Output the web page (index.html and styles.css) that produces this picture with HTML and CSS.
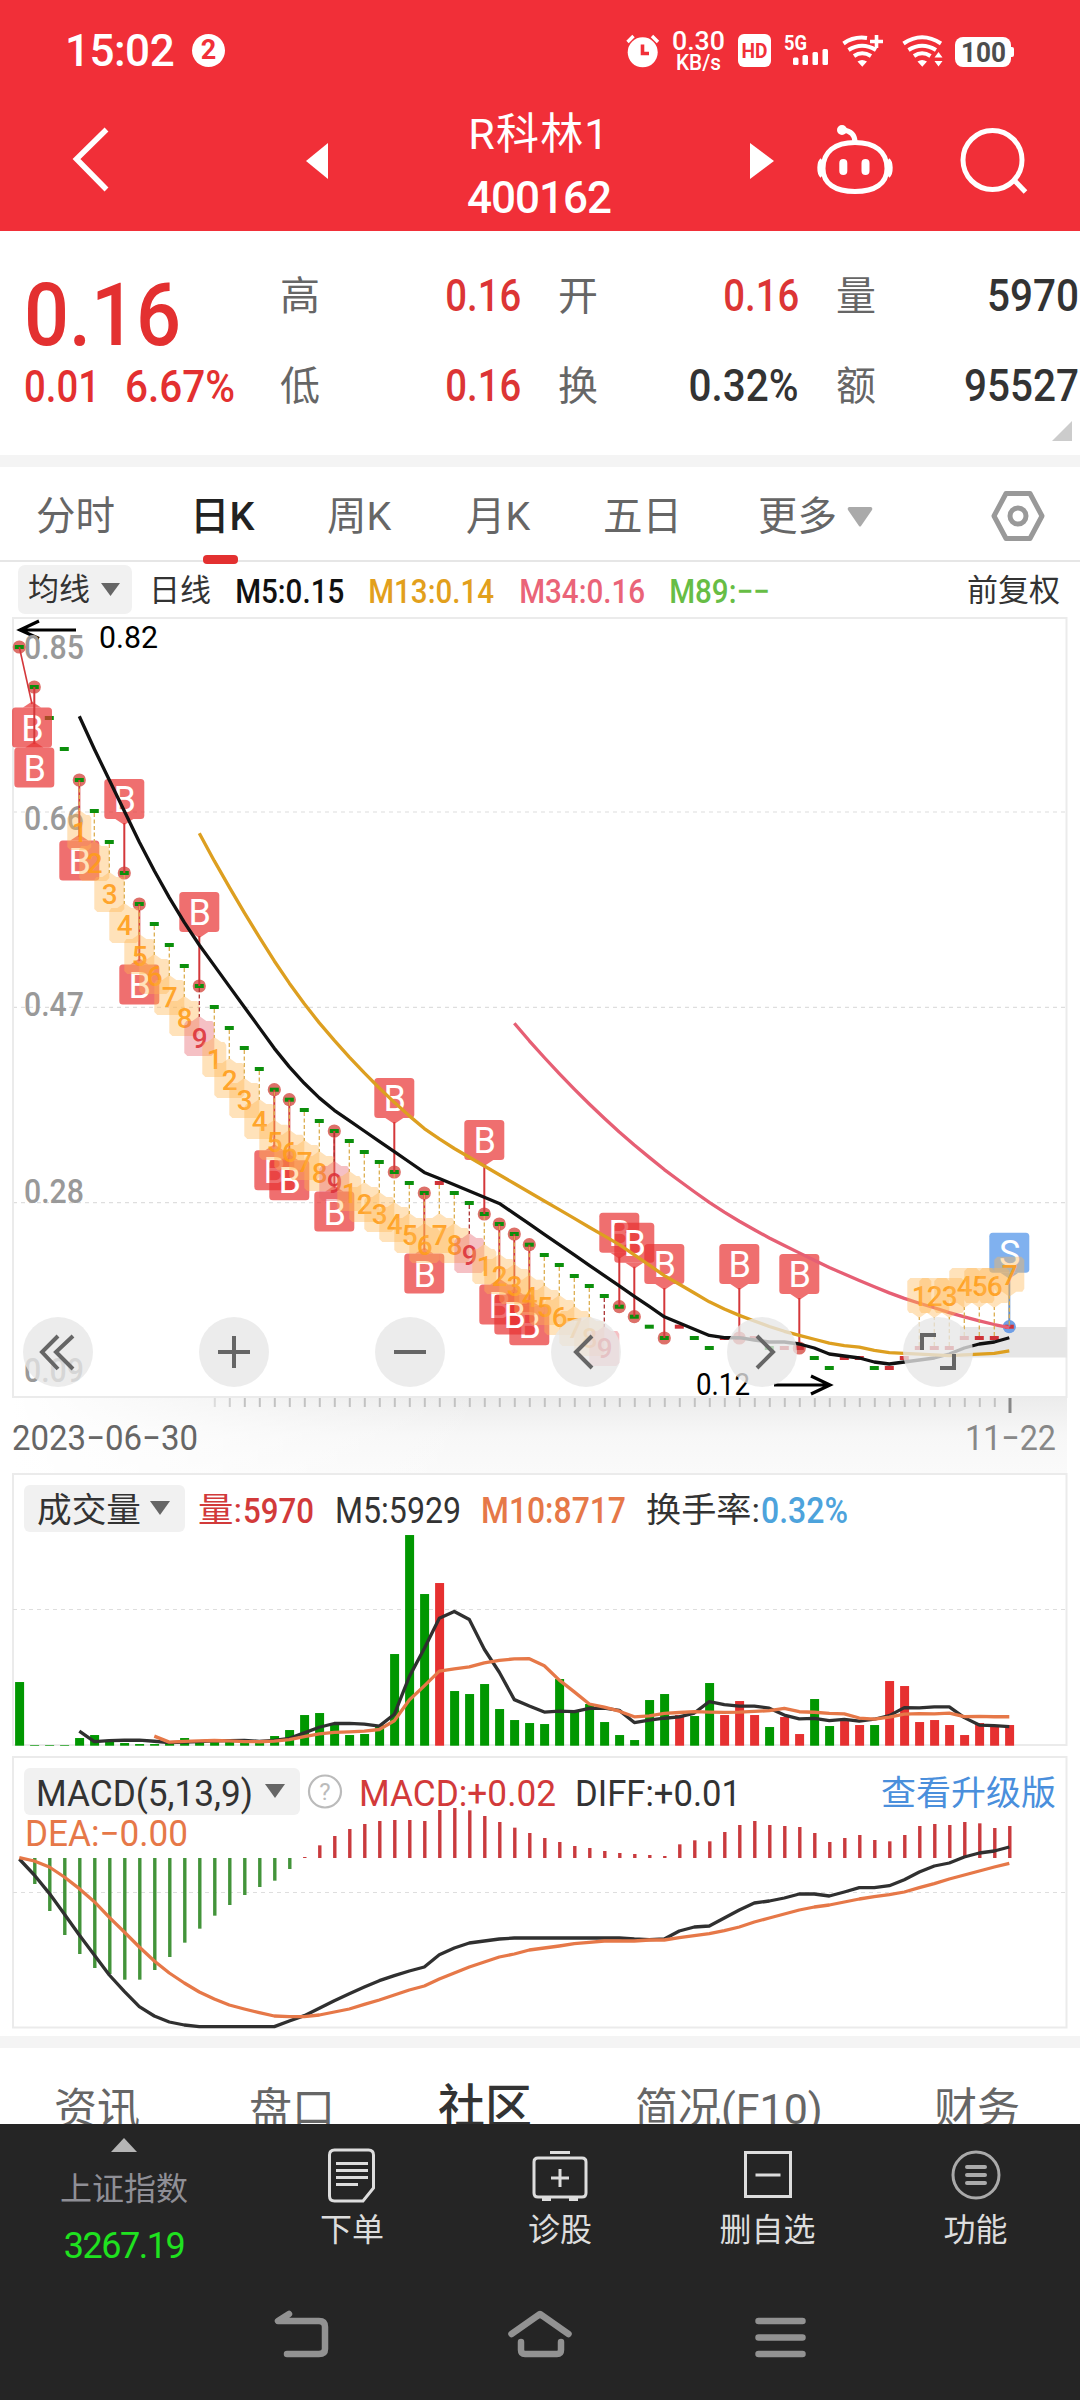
FILE: index.html
```html
<!DOCTYPE html>
<html lang="zh-CN">
<head>
<meta charset="utf-8">
<title>R科林1 400162</title>
<link rel="stylesheet" href="styles.css">
</head>
<body>
<header class="header">
  <div class="status">
    <span class="clock">15:02</span><span class="badge">2</span>
    <svg class="status-icons" width="480" height="60" viewBox="600 20 480 60" fill="#fff">
      <circle cx="642.7" cy="52.3" r="15"/>
      <path d="M627.5 42l6-6M658 42l-6-6" stroke="#fff" stroke-width="3.4"/>
      <path d="M642.5 44.500v9h6.500" fill="none" stroke="#f12f38" stroke-width="3.6"/>
      <text x="672" y="49.500" font-size="25" font-weight="500" textLength="53" lengthAdjust="spacingAndGlyphs">0.30</text>
      <text x="676" y="69.500" font-size="22" font-weight="500" textLength="45" lengthAdjust="spacingAndGlyphs">KB/s</text>
      <rect x="738" y="34" width="33" height="33" rx="6"/>
      <text x="741.500" y="57.500" font-size="20" font-weight="700" fill="#f12f38" textLength="26" lengthAdjust="spacingAndGlyphs">HD</text>
      <text x="784" y="49.500" font-size="20" font-weight="700" textLength="23" lengthAdjust="spacingAndGlyphs">5G</text>
      <rect x="793" y="57.500" width="5.500" height="7.500" rx="1.500"/><rect x="802.500" y="55" width="5.500" height="10" rx="1.500"/>
      <rect x="812.500" y="52" width="5.500" height="13" rx="1.500"/><rect x="822.500" y="49" width="5.500" height="16" rx="1.500"/>
      <g fill="none" stroke="#fff" stroke-width="4">
        <path d="M843.500 43.500Q854 36 867 38M848.500 50Q862 41.500 876 50M854 56Q862 50.500 871 56"/>
        <path d="M870 41.500h13M876.500 35v13" stroke-width="3.600"/>
        <path d="M903.500 43.500Q922 31 941 43.500M908.500 50Q922 41.500 936 50M914 56Q922 50.500 930.500 56"/>
      </g>
      <path d="M857.500 61.500Q862 58.500 867 61.500L862.300 66.800zM917.500 61.500Q922 58.500 927 61.500L922.300 66.800zM934.500 57.500l4-5.500 4 5.500zM934.500 61l4 5.500 4-5.500z"/>
      <rect x="955" y="37" width="56" height="30" rx="8"/><path d="M1010 47h2q2 0 2 2v6q0 2-2 2h-2z"/>
      <text x="961" y="61.500" font-size="27" font-weight="700" fill="#4d4d4d" textLength="45" lengthAdjust="spacingAndGlyphs">100</text>
    </svg>
  </div>
  <div class="titlebar">
    <svg class="back" width="40" height="66" viewBox="72 126 40 66"><path d="M106.500 129.500L76.500 159l30 30.500" fill="none" stroke="#fff" stroke-width="5.500"/></svg>
    <svg class="prev" width="22" height="36" viewBox="0 0 22 36"><path d="M22 0v36L0 18z" fill="#fff"/></svg>
    <div class="title"><div>R科林1</div><div class="code">400162</div></div>
    <svg class="next" width="24" height="36" viewBox="0 0 24 36"><path d="M0 0v36L24 18z" fill="#fff"/></svg>
    <svg class="robot" width="80" height="74" viewBox="815 123 80 74" fill="none" stroke="#fff" stroke-width="5">
      <path d="M855 142.500c20 0 32 9 32 26 0 15-12 23-32 23s-32-8-32-23c0-17 12-26 32-26z"/>
      <path d="M855 142c0-7-4-11-12-12"/><circle cx="842" cy="130" r="2.500"/>
      <path d="M822 160c-3 2-3.500 13 0 16M888 160c3 2 3.500 13 0 16" stroke-width="4.500"/>
      <path d="M843.300 163v8M865.500 163v8" stroke-width="8" stroke-linecap="round"/>
    </svg>
    <svg class="search" width="70" height="70" viewBox="959 126 70 70" fill="none" stroke="#fff" stroke-width="5"><circle cx="992.500" cy="160" r="29.500"/><path d="M1014 180l11.500 12"/></svg>
  </div>
</header>

<section class="quote">
  <div class="last"><div class="price"><b class="din">0.16</b></div><div class="change"><span class="din">0.01</span><span class="din wide">6.67%</span></div></div>
  <dl class="stats">
    <dt>高</dt><dd class="up"><span class="din">0.16</span></dd><dt>开</dt><dd class="up"><span class="din">0.16</span></dd><dt>量</dt><dd><span class="din wide">5970</span></dd>
    <dt>低</dt><dd class="up"><span class="din">0.16</span></dd><dt>换</dt><dd><span class="din wide">0.32%</span></dd><dt>额</dt><dd><span class="din wide">95527</span></dd>
  </dl>
  <svg class="corner" width="20" height="20"><path d="M20 0v20H0z" fill="#ccc"/></svg>
</section>

<nav class="periods">
  <a>分时</a><a class="on">日K</a><a>周K</a><a>月K</a><a>五日</a><a>更多<svg width="26" height="20"><path d="M2 0h22q2 1 1 3L14 19q-1 1-2 0L1 3Q0 1 2 0z" fill="#aaa"/></svg></a>
  <svg class="gear" width="56" height="52" viewBox="0 0 56 52" fill="none" stroke="#999" stroke-width="5" stroke-linejoin="round"><path d="M16 3.500h24L52 26 40 48.500H16L4 26z"/><circle cx="28" cy="26" r="8"/></svg>
</nav>

<div class="legend">
  <span class="pick">均线<svg width="19" height="13"><path d="M0 0h19L9.500 13z" fill="#666"/></svg></span>
  <span>日线</span><span class="din m5">M5:0.15</span><span class="din m13">M13:0.14</span><span class="din m34">M34:0.16</span><span class="din m89">M89:−−</span><span class="adj">前复权</span>
</div>

<section class="kline">
  <svg id="kline" width="1080" height="858" viewBox="0 615 1080 858"></svg>
  <div class="tools">
    <button><svg viewBox="-35 -35 70 70"><path d="M0-16L-16 0 0 17M15-16L-2 0 15 17"/></svg></button>
    <button><svg viewBox="-35 -35 70 70"><path d="M-16 0h32M0-16v32"/></svg></button>
    <button><svg viewBox="-35 -35 70 70"><path d="M-16 0h32"/></svg></button>
    <button><svg viewBox="-35 -35 70 70"><path d="M6-16L-10 0 6 16"/></svg></button>
    <button><svg viewBox="-35 -35 70 70"><path d="M-5-16L11 0-5 16"/></svg></button>
    <button><svg viewBox="-35 -35 70 70"><path d="M-16-2v-15H-2M16 2v14H2"/></svg></button>
  </div>
</section>
<svg id="volume" class="panel" width="1080" height="283" viewBox="0 1473 1080 283"></svg>
<svg id="macd" class="panel" width="1080" height="280" viewBox="0 1756 1080 280"></svg>

<nav class="sections"><a>资讯</a><a>盘口</a><a class="on">社区</a><a>简况(F10)</a><a>财务</a></nav>

<footer class="footer">
  <div class="actions">
    <div class="index"><svg width="26" height="14"><path d="M13 0l13 14H0z" fill="#b5b5b5"/></svg><span class="name">上证指数</span><span class="points">3267.19</span></div>
    <div class="action"><svg width="60" height="60" viewBox="-30 -30 60 60"><path d="M-22.500-20q0-5 5-5h34q5 0 5 5v33L11 26h-28.500q-5 0-5-5zM-16-11.500h32M-16-4.500h32M-16 2.500h32M-16 9.500H6"/></svg><span>下单</span></div>
    <div class="action"><svg width="60" height="60" viewBox="-30 -30 60 60"><path d="M-26-13q0-4 4-4h44q4 0 4 4v31q0 4-4 4h-44q-4 0-4-4zM-10-22.500h20M-9 3H9M0-6v18M-18 24.500h9M9 24.500h9"/></svg><span>诊股</span></div>
    <div class="action"><svg width="60" height="60" viewBox="-30 -30 60 60"><path d="M-22.500-22.500h45v44h-45zM-12.500 0h25"/></svg><span>删自选</span></div>
    <div class="action dim"><svg width="60" height="60" viewBox="-30 -30 60 60"><circle r="23"/><path d="M-9-8H9M-9 0H9M-9 8H9" stroke-width="4" stroke-linecap="round"/></svg><span>功能</span></div>
  </div>
  <svg class="sysnav" width="1080" height="70" viewBox="0 2300 1080 70" fill="none" stroke="#929292" stroke-width="6.500" stroke-linecap="round" stroke-linejoin="round">
    <path d="M289 2314l-11 7h41q6 0 6 6v22q0 5-6 5h-32M511.500 2334l28.500-20 28.500 20M521 2342v8q0 4 4 4h32q4 0 4-4v-8M758.500 2321h44M758.500 2337.500h44M758.500 2354h44"/>
  </svg>
</footer>
<script src="charts.js"></script>
</body>
</html>
```
FILE: styles.css
```css
* { box-sizing: border-box; }
body { margin: 0; width: 1080px; height: 2400px; overflow: hidden; background: #fff; color: #333; font-family: Roboto, "Noto Sans CJK SC", sans-serif; }
svg { display: block; flex: none; }
svg text { font-family: Roboto, "Noto Sans CJK SC", sans-serif; }
.din { display: inline-block; font-weight: 500; transform: scaleX(.87); transform-origin: left center; white-space: nowrap; }

.header { height: 231px; background: #f12f38; color: #fff; }
.status { display: flex; align-items: center; height: 100px; padding-left: 65px; }
.clock { width: 109px; font-size: 44px; font-weight: 500; letter-spacing: -.5px; line-height: 60px; padding-top: 2px; }
.badge { width: 33px; height: 33px; margin-left: 18px; border-radius: 50%; background: #fff; color: #f12f38; font-size: 27px; font-weight: 700; line-height: 33px; text-align: center; }
.status-icons { margin-left: auto; }
.titlebar { display: flex; align-items: flex-start; height: 130px; padding-left: 72px; }
.back { margin-top: 26px; }
.prev { margin: 43px 0 0 194px; }
.title { width: 280px; margin: 4px 0 0 71px; font-size: 43px; font-weight: 400; letter-spacing: 1.200px; line-height: 60px; text-align: center; }
.title .code { margin-top: 4px; font-size: 44px; font-weight: 500; letter-spacing: -1px; }
.next { margin: 43px 0 0 71px; }
.robot { margin: 23px 0 0 41px; }
.search { margin: 26px 0 0 64px; }

.quote { position: relative; display: flex; height: 236px; border-bottom: 12px solid #f4f4f4; }
.last { width: 281px; padding: 39px 0 0 24px; color: #e33030; }
.price { height: 90px; font-size: 88px; line-height: 90px; }
.price .din { font-weight: 500; transform: scaleX(.9); }
.change { display: grid; grid-template-columns: 101px 1fr; font-size: 44px; line-height: 60px; margin-top: -3px; }
.stats { flex: 1; display: grid; grid-template-columns: 41px 200px 37px 41px 200px 37px 41px 202px; grid-template-rows: 90px 90px; margin: 20px 0 0 -1px; font-size: 44px; line-height: 90px; }
.stats dt { font-size: 40px; color: #666; padding-top: 1px; }
.stats dt:nth-of-type(3n+2) { grid-column: 4; }
.stats dt:nth-of-type(3n) { grid-column: 7; }
.stats dt:nth-of-type(3n+1) { grid-column: 1; }
.stats dd { margin: 0; text-align: right; }
.stats .din { transform-origin: right center; }
.change .wide, .stats .wide { transform: scaleX(.92); }
.stats .up { color: #dc3535; }
.corner { position: absolute; right: 8px; bottom: 14px; }

.periods { display: grid; grid-template-columns: 154px 137px 139px 137px 155px 232px 60px; height: 95px; padding-left: 36px; border-bottom: 2px solid #e6e6e6; font-size: 39.500px; line-height: 95px; color: #666; }
.periods a { display: flex; align-items: center; gap: 10px; padding-top: 2px; }
.periods .on { position: relative; color: #222; font-weight: 500; }
.periods .on::after { content: ""; position: absolute; left: 13px; bottom: 0; width: 35px; height: 9px; border-radius: 4px; background: #e33030; }
.gear { align-self: center; }

.legend { display: grid; grid-template-columns: 114px 84px 133px 151px 150px 297px 1fr; height: 53px; padding: 3px 0 0 18px; font-size: 31px; line-height: 52px; }
.pick { display: flex; align-items: center; height: 49px; padding-left: 10px; gap: 11px; background: #f1f1f1; border-radius: 7px; }
.legend > span + span { padding-left: 17px; }
.legend > .din { padding-left: 22px; font-size: 34px; }
.m5 { color: #111; } .m13 { color: #e2a01c; } .m34 { color: #ea6478; } .m89 { color: #67bd45; }
.legend > .adj { padding-left: 20px; }

.kline { position: relative; height: 858px; }
.tools { position: absolute; top: 702px; left: 23px; display: flex; gap: 106px; }
.tools button { width: 70px; height: 70px; padding: 0; border: 0; border-radius: 50%; background: rgba(231, 231, 231, .78); }
.tools path { fill: none; stroke: #666; stroke-width: 4; }

.sections { display: grid; grid-template-columns: 195px 189px 197px 299px 1fr; height: 88px; padding-left: 54px; border-top: 12px solid #f4f4f4; overflow: hidden; font-size: 43px; line-height: 123px; color: #666; white-space: nowrap; }
.sections .on { color: #333; font-size: 47px; font-weight: 500; line-height: 117px; }

.footer { height: 276px; background: #252525; color: #ddd; font-size: 32px; }
.actions { display: grid; grid-template-columns: 248px 208px 208px 207px 209px; height: 176px; }
.index { display: flex; flex-direction: column; align-items: center; padding-top: 14px; line-height: 57px; }
.index .name { margin-top: 9px; color: #8f8f96; }
.index .points { font-size: 36px; letter-spacing: -1.500px; color: #1fe21f; }
.action { display: flex; flex-direction: column; align-items: center; padding-top: 21px; line-height: 51px; }
.action svg { fill: none; stroke: #ddd; stroke-width: 3; }
.action.dim svg { stroke: #aaa; }
.sysnav { display: block; }
```
FILE: charts.js
```js
const COUNT = 67, X0 = 19.3, STEP = 15;
const xAt = i => X0 + STEP * i;
const el = (tag, attrs, text) => {
  const a = Object.entries(attrs).map(([k, v]) => `${k}="${v}"`).join(' ');
  return `<${tag} ${a}>${text ?? ''}</${tag}>`;
};
const label = (text, x, y, size, width, fill, weight = 400) =>
  el('text', { x, y, 'font-size': size, fill, 'font-weight': weight, textLength: width, lengthAdjust: 'spacingAndGlyphs' }, text);
const poly = (points, stroke, w = 3.3) => el('polyline', { points: points.map(p => p.join()).join(' '), fill: 'none', stroke, 'stroke-width': w, 'stroke-linejoin': 'round' });
const average = (ys, n) => ys.slice(n - 1).map((_, k) => [xAt(k + n - 1), ys.slice(k, k + n).reduce((a, b) => a + b) / n]);
const grid = y => el('path', { d: `M13 ${y}H1066`, stroke: '#dedede', 'stroke-width': 1.2, 'stroke-dasharray': '4 4' });
const frame = (y, b) => el('rect', { x: 13, y, width: 1053.5, height: b - y, fill: 'none', stroke: '#ebebeb', 'stroke-width': 2 });
const picker = (x, y, w) => el('rect', { x, y, width: w, height: 47, rx: 6, fill: '#f1f1f1' });
const caret = (x, y) => el('path', { d: `M${x} ${y}h20l-10 14z`, fill: '#666' });

// Daily closes, as vertical chart positions
const close = [647, 687, 718, 749, 780, 811, 842, 873, 904, 924, 945, 966, 986, 1007, 1028, 1048, 1069, 1089.7, 1099.7, 1110, 1121, 1131, 1141, 1152, 1162, 1172, 1183, 1193, 1183, 1193, 1203, 1214, 1224, 1234, 1244.7, 1255, 1265, 1276, 1286, 1296, 1306.7, 1316.7, 1326.7, 1338, 1326.7, 1338, 1348, 1338, 1338, 1338, 1348, 1348, 1348, 1358, 1368, 1358, 1358, 1368, 1368, 1358, 1348, 1348, 1348, 1338, 1338, 1338, 1326.7];
const redDays = new Set([28, 44, 47, 48, 49, 51, 52, 55, 56, 58, 59, 60, 61, 62, 63, 64, 65, 66]);

function drawKline() {
  let s = `<defs><linearGradient id="v" x1="0" y1="0" x2="0" y2="1"><stop offset="0" stop-color="#ececec"/><stop offset=".5" stop-color="#f7f7f7"/><stop offset="1" stop-color="#fafafa"/></linearGradient>
  <linearGradient id="h"><stop offset="0" stop-color="#fff"/><stop offset=".28" stop-color="#fff" stop-opacity=".3"/><stop offset=".45" stop-color="#fff" stop-opacity="0"/></linearGradient></defs>`;
  s += el('rect', { x: 12, y: 1398, width: 1055, height: 75, fill: 'url(#v)' }) + el('rect', { x: 12, y: 1398, width: 1055, height: 75, fill: 'url(#h)' });
  s += [812, 1007.3, 1202.7].map(grid).join('') + frame(618, 1397);
  s += el('rect', { x: 960, y: 1327, width: 107, height: 30.5, fill: '#e6e6e6' });
  for (let i = 13; i < 66; i++) s += el('path', { d: `M${xAt(i) + .5} 1398v9`, stroke: '#c2c2c2', 'stroke-width': 2, opacity: Math.min(1, (i - 11) / 4) });
  s += el('path', { d: 'M1010 1398v15', stroke: '#888', 'stroke-width': 3 });
  s += el('path', { d: 'M76 630H20M39 621L20 630l19 8.500M774 1385h55M811 1376l19 9-19 9', fill: 'none', stroke: '#000', 'stroke-width': 3.2 });
  s += label('0.82', 99, 648, 31, 59, '#000') + label('0.12', 696, 1394.5, 31, 54, '#000');
  [['0.85', 659], ['0.66', 830], ['0.47', 1016], ['0.28', 1203], ['0.09', 1382]].forEach(([t, y]) => s += label(t, 24, y, 34, 60, '#999', 500));

  const below = [0, 1, 4, 8, 17, 18, 21, 27, 32, 34, 33], above = [7, 12, 25, 31, 40, 41, 43, 48, 52, 66];
  [...below, ...above].forEach(i => s += el('circle', { cx: xAt(i), cy: close[i], r: 6.6, fill: i === 66 ? '#6f9fe6' : '#dd7069' }));
  close.forEach((y, i) => s += el('rect', { x: xAt(i) - 4.5, y: y - 2, width: 9, height: 4, fill: redDays.has(i) ? '#cf3238' : '#0c8f0c' }));
  [...below, ...above].forEach(i => {
    const up = above.includes(i), sell = i === 66, x = xAt(i), y = close[i];
    const bx = Math.max(12, x - 20), by = up ? y - 94 : y + 60.5;
    const color = sell ? '#4a90e8' : '#e83232', tip = i === 0 ? 32 : x;
    s += el('path', { d: up ? `M${x} ${y}V${y - 50}` : `M${x} ${y}L${tip} ${y + 57}`, stroke: sell ? '#6590c8' : '#d4383b', 'stroke-width': i === 0 ? 1.6 : 2 });
    s += el('rect', { x: bx, y: by, width: 40, height: 40, rx: 3.5, fill: color, 'fill-opacity': .7 });
    s += el('path', { d: up ? `M${tip - 9} ${by + 40}h18l-9 6z` : `M${tip - 9} ${by}h18l-9-6z`, fill: color, 'fill-opacity': .7 });
    s += el('text', { x: bx + 20.5, y: by + 33, 'font-size': 36, fill: '#fff', 'text-anchor': 'middle' }, sell ? 'S' : 'B');
  });
  s += poly(average(close, 5), '#111') + poly(average(close, 13), '#dd9f20') + poly(average(close, 34), '#e65f74');

  const count = (i, n, up) => {
    const x = xAt(i), y = close[i], d = up ? -1 : 1, w = n === 1 ? 12 : 15, nine = n === 9;
    s += el('path', { d: `M${x} ${y + 2 * d}V${y + 31 * d}`, stroke: nine ? '#a33' : '#dcae50', 'stroke-width': 1.3, 'stroke-dasharray': '4 2.5' });
    const edge = y + 36 * d, far = y + 70 * d;
    s += el('path', { d: `M${x} ${y + 30 * d}L${x + 7} ${edge - d}H${x + w - 2}L${x + w} ${edge + 2 * d}V${far - 3 * d}L${x + w - 3} ${far}H${x - w + 3}L${x - w} ${far - 3 * d}V${edge + 2 * d}L${x - w + 2} ${edge - d}H${x - 7}z`, fill: nine ? '#e6616b' : '#ffb652', 'fill-opacity': .4 });
    s += el('text', { x: x + .5, y: y + 52 * d + 10, 'font-size': 28, 'font-weight': 500, fill: nine ? '#dc3038' : '#ff9d18', 'fill-opacity': .9, 'text-anchor': 'middle' }, n);
  };
  for (let i = 4; i < 40; i++) count(i, (i - 4) % 9 + 1, false);
  for (let i = 60; i < 67; i++) count(i, i - 59, true);
  s += label('2023−06−30', 12, 1450, 35, 186, '#666') + label('11−22', 965, 1450, 35, 91, '#888');
  document.getElementById('kline').innerHTML = s;
}

function drawVolume() {
  const h = [191, 2, 2, 2, 23, 32, 17, 8, 5, 5, 12, 23, 17, 14, 11, 13, 11, 29, 47, 92, 98, 67, 32, 35, 62, 275, 632, 455, 488, 164, 155, 185, 110, 77, 68, 65, 200, 102, 125, 71, 32, 17, 137, 155, 92, 89, 188, 92, 134, 92, 56, 86, 35, 140, 59, 74, 62, 62, 194, 179, 71, 77, 62, 32, 68, 62, 62].map(v => v / 3);
  const red = new Set([28, 44, 47, 48, 49, 51, 52, 55, 56, 58, 59, 60, 61, 62, 63, 64, 65, 66]);
  const base = 1745.7, ys = h.map(v => base - v);
  let s = frame(1474, 1745) + grid(1609.5);
  h.forEach((v, i) => s += el('rect', { x: xAt(i) - 4.2, y: base - v, width: 9, height: v, fill: red.has(i) ? '#e63030' : '#009700' }));
  s += poly(average(ys, 5), '#303030') + poly(average(ys, 10), '#e67848');
  s += picker(24, 1485, 161) + caret(150, 1501) + label('成交量', 37, 1522, 34, 104, '#333');
  s += label('量:', 198, 1522, 34, 44, '#d23a3a') + label('5970', 243, 1522.5, 35.5, 71, '#d23a3a', 500);
  s += label('M5:5929', 335, 1522.5, 36, 126, '#333') + label('M10:8717', 481, 1522.5, 36, 145, '#e67848', 500);
  s += label('换手率:', 646, 1522, 34, 114, '#333') + label('0.32%', 761, 1522.5, 36, 87, '#4da3dc', 500);
  document.getElementById('volume').innerHTML = s;
}

function drawMacd() {
  const zero = 1858, toY = v => 1750 + v / 3;
  const bars = [324, 402, 483, 555, 612, 654, 672, 689, 689, 660, 621, 578, 536, 497, 465, 435, 411, 392, 357, 321, 286, 258, 237, 222, 213, 210, 210, 213, 180, 174, 181, 198, 216, 233, 249, 264, 276, 288, 294, 303, 309, 312, 315, 318, 283, 271, 274, 246, 225, 213, 225, 228, 231, 249, 276, 264, 255, 270, 274, 255, 228, 222, 225, 216, 220, 234, 228].map(toY);
  const diff = [327, 375, 430, 492, 555, 615, 675, 724, 770, 798, 816, 825, 830, 830, 830, 830, 830, 830, 813, 797, 775, 752, 731, 711, 692, 677, 663, 651, 614, 594, 579, 573, 567, 564, 564, 564, 564, 564, 564, 564, 564, 567, 569, 567, 543, 531, 528, 504, 480, 459, 453, 444, 432, 432, 438, 426, 413, 413, 407, 389, 366, 348, 339, 321, 309, 303, 291].map(toY);
  const dea = [323, 333, 351, 381, 416, 455, 502, 546, 591, 633, 669, 699, 726, 747, 765, 777, 788, 798, 800, 800, 795, 786, 777, 763, 750, 735, 720, 708, 687, 669, 651, 636, 621, 612, 600, 594, 588, 581, 577, 573, 573, 573, 570, 570, 563, 557, 551, 542, 531, 516, 504, 492, 480, 471, 465, 456, 447, 440, 434, 426, 413, 401, 387, 375, 363, 351, 340].map(toY);
  let s = frame(1757, 2027.5) + grid(1892.5);
  bars.forEach((y, i) => s += el('rect', { x: xAt(i) - 1.2, y: Math.min(y, zero), width: 3.4, height: Math.abs(y - zero), fill: y > zero ? '#43943a' : '#c93a3d' }));
  s += poly(diff.map((y, i) => [xAt(i), y]), '#303030') + poly(dea.map((y, i) => [xAt(i), y]), '#e67848');
  s += picker(24, 1768, 276) + caret(265, 1784) + label('MACD(5,13,9)', 36, 1805.5, 36, 217, '#333');
  s += el('circle', { cx: 325, cy: 1791.5, r: 16, fill: 'none', stroke: '#bbb', 'stroke-width': 2.2 }) + el('text', { x: 325, y: 1800, 'font-size': 24, fill: '#bbb', 'text-anchor': 'middle' }, '?');
  s += label('MACD:+0.02', 359, 1805.5, 36, 197, '#d23a3a') + label('DIFF:+0.01', 575, 1805.5, 36, 166, '#333');
  s += label('查看升级版', 881, 1805, 34.5, 175, '#4a8fdc') + label('DEA:−0.00', 25, 1846, 36, 163, '#e67848');
  document.getElementById('macd').innerHTML = s;
}

drawKline();
drawVolume();
drawMacd();
```
